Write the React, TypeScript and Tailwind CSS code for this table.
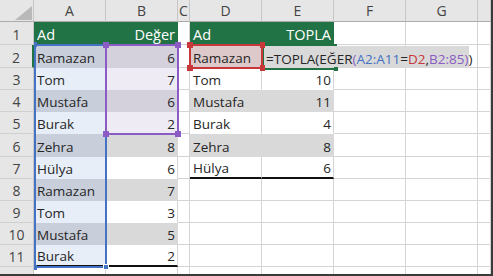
const COLS = ["A", "B", "C", "D", "E", "F", "G", ""];
const COL_W = ["w-[72px]", "w-[72px]", "w-[12px]", "w-[72px]", "w-[72px]", "w-[72px]", "w-[72px]", "w-[13px]"];
const ROW_H = ["h-[23px]", "h-[23px]", "h-[22px]", "h-[22px]", "h-[22px]", "h-[23px]", "h-[22px]", "h-[22px]", "h-[22px]", "h-[22px]", "h-[22px]", "h-[22px]"];

const names = ["Ramazan", "Tom", "Mustafa", "Burak", "Zehra", "Hülya", "Ramazan", "Tom", "Mustafa", "Burak"];
const vals = ["6", "7", "6", "2", "8", "6", "7", "3", "5", "2"];
const dNames = ["Ramazan", "Tom", "Mustafa", "Burak", "Zehra", "Hülya"];
const eVals = ["", "10", "11", "4", "8", "6"];

type Cell = { text?: string; cls: string; right?: boolean };

const GRID = "bg-white border-r-[#d4d4d4] border-b-[#d4d4d4]";
const WHITE_BAND = "bg-white border-r-[#d4d4d4] border-b-white";
const GRAY_BAND = "bg-[#d9d9d9] border-r-[#d9d9d9] border-b-[#d9d9d9]";
const GREEN = "bg-[#217346] border-r-[#217346] border-b-[#217346] text-white text-[14.5px]";
// last row of a table: thick dark bottom edge
const WHITE_LAST = "bg-white border-r-[#d4d4d4] border-b-2 border-b-[#111111]";
const BLUE_LAST = "bg-[#e8eef8] border-r-[#e8eef8] border-b-2 border-b-[#111111]";

function getCell(r: number, c: number): Cell {
  const even = r % 2 === 0;
  if (r === 1) {
    if (c === 0) return { text: "Ad", cls: GREEN };
    if (c === 1) return { text: "Değer", cls: GREEN, right: true };
    if (c === 3) return { text: "Ad", cls: GREEN };
    if (c === 4) return { text: "TOPLA", cls: GREEN, right: true };
    return { cls: GRID };
  }
  if (r >= 2 && r <= 11) {
    if (c === 0) {
      let band = even
        ? "bg-[#c9cfda] border-r-[#c9cfda] border-b-[#c9cfda]"
        : "bg-[#e8eef8] border-r-[#e8eef8] border-b-[#e8eef8]";
      if (r === 11) band = BLUE_LAST;
      return { text: names[r - 2], cls: band };
    }
    if (c === 1) {
      let band = even ? GRAY_BAND : WHITE_BAND;
      if (r <= 5) {
        band = even
          ? "bg-[#d4d0dc] border-r-[#d4d0dc] border-b-[#d4d0dc]"
          : "bg-[#efebf5] border-r-[#efebf5] border-b-[#efebf5]";
      }
      if (r === 11) band = WHITE_LAST;
      return { text: vals[r - 2], cls: band, right: true };
    }
  }
  if (r >= 2 && r <= 7 && (c === 3 || c === 4)) {
    let band = even ? GRAY_BAND : WHITE_BAND;
    if (r === 2 && c === 3) band = "bg-[#ddc9ca] border-r-[#ddc9ca] border-b-[#ddc9ca]";
    if (r === 7) band = WHITE_LAST;
    if (c === 3) return { text: dNames[r - 2], cls: band };
    return { text: eVals[r - 2], cls: band, right: true };
  }
  return { cls: GRID };
}

function Handle({ cls }: { cls: string }) {
  return <div className={"absolute " + cls} />;
}

export default function App() {
  const rows = Array.from({ length: 12 }, (_, i) => i + 1);

  return (
    <div
      className="relative w-[493px] h-[276px] overflow-hidden bg-white border-r-2 border-b-2 border-[#3a3a3a] text-[#262626]"
      style={{ fontFamily: '"Open Sans", "Noto Sans", sans-serif' }}
    >
      {/* Column headers */}
      <div className="flex h-[22px]">
        <div className="relative w-[34px] h-full bg-[#e6e6e6] border-r border-b border-r-[#c6c6c6] border-b-[#ababab]">
          <svg className="absolute left-[15px] top-[6px]" width="17" height="14" viewBox="0 0 17 14">
            <polygon points="17,0 17,14 0,14" fill="#b9b9b9" />
          </svg>
        </div>
        {COLS.map((col, i) => (
          <div
            key={i}
            className={
              COL_W[i] +
              " h-full flex items-center justify-center bg-[#e6e6e6] border-r border-b border-r-[#c6c6c6] border-b-[#ababab] text-[14px] text-[#444444]"
            }
          >
            {col}
          </div>
        ))}
      </div>

      {/* Rows */}
      {rows.map((r) => (
        <div key={r} className={"flex " + ROW_H[r - 1]}>
          <div
            className={
              "w-[34px] h-full flex items-end justify-center bg-[#e6e6e6] border-b border-b-[#d0d0d0] text-[14px] leading-[19px] text-[#444444] " +
              (r === 2 ? "border-r-2 border-r-[#217346]" : "border-r border-r-[#c6c6c6]")
            }
          >
            {r}
          </div>
          {COLS.map((_, c) => {
            const cell = getCell(r, c);
            return (
              <div
                key={c}
                className={
                  COL_W[c] +
                  " h-full flex items-end overflow-hidden whitespace-nowrap border-r border-b text-[13.5px] leading-[18px] " +
                  (cell.right ? "justify-end pr-[2px] " : "pl-[3px] ") +
                  cell.cls
                }
              >
                {cell.text}
              </div>
            );
          })}
        </div>
      ))}

      {/* Range finder: A2:A11 */}
      <div className="absolute left-[34px] top-[44px] w-[73px] h-[224px] border-2 border-[#4472c4]" />
      <Handle cls="left-[34px] top-[42px] w-[3px] h-[5px] bg-[#4472c4]" />
      <Handle cls="left-[34px] top-[265px] w-[3px] h-[5px] bg-[#4472c4]" />
      <Handle cls="left-[103px] top-[264px] w-[6px] h-[6px] bg-[#4472c4] border border-white" />

      {/* Range finder: B2:B5 */}
      <div className="absolute left-[105px] top-[44px] w-[74px] h-[91px] border-2 border-[#8a5cc4]" />
      <Handle cls="left-[103px] top-[42px] w-[6px] h-[6px] bg-[#8a5cc4]" />
      <Handle cls="left-[175px] top-[42px] w-[6px] h-[6px] bg-[#8a5cc4]" />
      <Handle cls="left-[103px] top-[131px] w-[6px] h-[6px] bg-[#8a5cc4]" />
      <Handle cls="left-[175px] top-[131px] w-[6px] h-[6px] bg-[#8a5cc4]" />

      {/* Active cell E2 */}
      <div className="absolute left-[262px] top-[44px] w-[75px] h-[26px] border-2 border-[#217346]" />

      {/* In-cell formula editor */}
      <div className="absolute left-[264px] top-[46px] w-[205px] h-[22px] flex items-end bg-[#d9d9d9] pl-[2px] text-[13.5px] leading-[18px] whitespace-nowrap text-[#262626]">
        <span>=TOPLA(EĞER</span>
        <span className="text-[#8a5cc4]">(</span>
        <span className="text-[#4472c4]">A2:A11</span>
        <span>=</span>
        <span className="text-[#c8383a]">D2</span>
        <span>,</span>
        <span className="text-[#8a5cc4]">B2:85)</span>
        <span>)</span>
        <span className="ml-[2px] mb-[2px] w-px h-[15px] bg-[#111111]" />
      </div>
      <Handle cls="left-[261px] top-[67px] w-[4px] h-[4px] bg-[#217346]" />
      <Handle cls="left-[334px] top-[67px] w-[4px] h-[4px] bg-[#217346]" />

      {/* Range finder: D2 */}
      <div className="absolute left-[189px] top-[44px] w-[74px] h-[25px] border-2 border-[#c8383a]" />
      <Handle cls="left-[187px] top-[42px] w-[6px] h-[6px] bg-[#c8383a]" />
      <Handle cls="left-[260px] top-[42px] w-[5px] h-[6px] bg-[#c8383a]" />
      <Handle cls="left-[187px] top-[65px] w-[6px] h-[6px] bg-[#c8383a]" />
      <Handle cls="left-[260px] top-[65px] w-[5px] h-[6px] bg-[#c8383a]" />
    </div>
  );
}
